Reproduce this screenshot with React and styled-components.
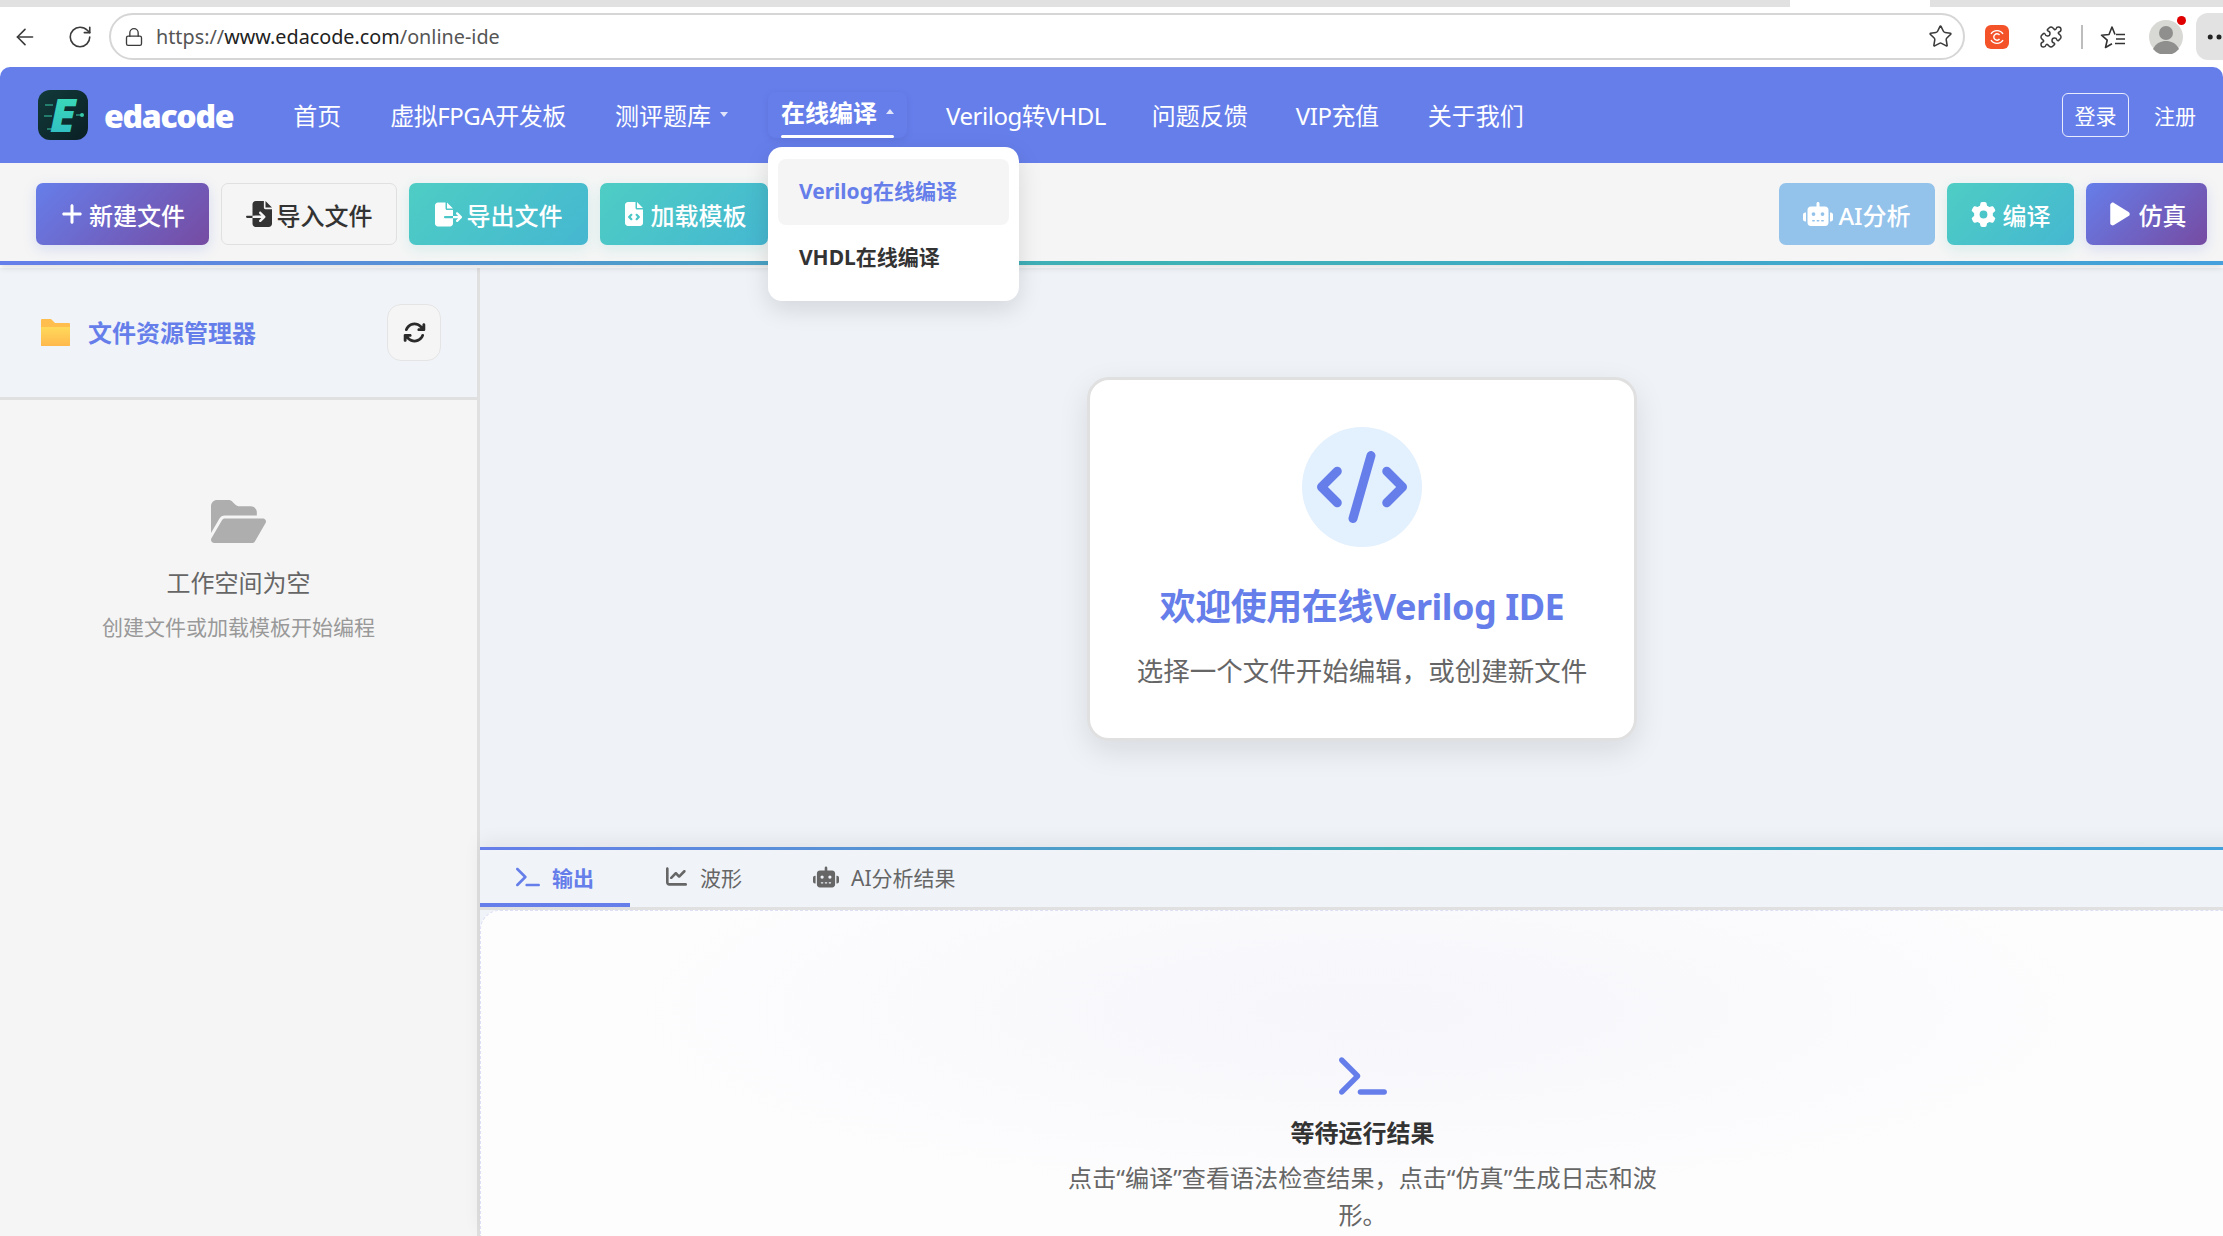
import React from 'react'
import styled, { createGlobalStyle } from 'styled-components'
import { ArrowLeft, RotateCw, Lock, Star, Puzzle, MoreHorizontal } from 'lucide-react'
import {
  FaPlus, FaFileImport, FaFileExport, FaFileCode, FaRobot, FaGear, FaPlay,
  FaArrowsRotate, FaFolderOpen, FaCode, FaTerminal, FaChartLine
} from 'react-icons/fa6'

const GlobalStyle = createGlobalStyle`
  html, body {
    margin: 0;
    padding: 0;
    overflow: hidden;
    background: #f0f4f9;
    font-family: "Noto Sans", "Noto Sans CJK SC", sans-serif;
  }
  * { box-sizing: border-box; }
`

const Page = styled.div`
  width: 2223px;
  height: 1236px;
  overflow: hidden;
  display: flex;
  flex-direction: column;
  background: #fff;
`

/* browser chrome */
const TabStrip = styled.div`
  height: 7px;
  flex: none;
  display: flex;
  background: #e1e1e1;
`

const ActiveTab = styled.div`
  width: 140px;
  margin-left: 1790px;
  background: #fff;
`

const BrowserBar = styled.div`
  height: 60px;
  flex: none;
  display: flex;
  align-items: center;
  padding: 0 0 1px 12px;
  background: #fff;
  color: #3b3b3b;
`

const ChromeButton = styled.div`
  width: ${p => p.$w || 40}px;
  margin-left: ${p => p.$ml || 0}px;
  margin-right: ${p => p.$mr || 0}px;
  flex: none;
  display: flex;
  justify-content: center;
  align-items: center;
`

const AddressBar = styled.div`
  width: 1856px;
  height: 47px;
  flex: none;
  display: flex;
  align-items: center;
  padding: 0 10px 0 13px;
  border: 2px solid #d6d6d6;
  border-radius: 24px;
  margin-right: 20px;
`

const UrlText = styled.span`
  margin-left: 12px;
  flex: 1;
  font-size: 19.800px;
  color: #555;
  span { color: #222; }
`

const ExtIcon = styled.div`
  width: 24px;
  height: 24px;
  flex: none;
  border-radius: 6px;
  background: #f4532a;
  display: flex;
  align-items: center;
  justify-content: center;
`

const Separator = styled.div`
  width: 2px;
  height: 24px;
  background: #bdbdbd;
  margin: 0 17px 0 15px;
  flex: none;
`

const FavoritesIcon = styled.svg`
  flex: none;
`

const Avatar = styled.div`
  position: relative;
  width: 34px;
  height: 34px;
  margin-left: 23px;
  flex: none;
  svg { display: block; }
`

const RedDot = styled.span`
  position: absolute;
  top: -4px;
  right: -3px;
  width: 9px;
  height: 9px;
  border-radius: 50%;
  background: #e00000;
`

const MenuButton = styled.div`
  width: 27px;
  height: 47px;
  margin-left: 13px;
  flex: none;
  overflow: hidden;
  border-radius: 12px 0 0 12px;
  background: #e2e2e2;
  display: flex;
  align-items: center;
  padding-left: 8px;
  color: #222;
  svg { flex: none; }
`

/* site nav */
const NavBar = styled.header`
  height: 96px;
  flex: none;
  position: relative;
  z-index: 5;
  display: flex;
  align-items: center;
  padding: 0 27px 0 38px;
  background: #667eea;
  border-radius: 10px 10px 0 0;
  color: #fff;
`

const Brand = styled.div`
  display: flex;
  align-items: center;
  gap: 16px;
  margin-right: 60px;
`

const BrandName = styled.span`
  font-size: 32px;
  font-weight: 900;
  letter-spacing: -1.300px;
`

const NavItem = styled.div`
  position: relative;
  display: flex;
  align-items: center;
  height: 46px;
  padding-bottom: 2px;
  margin-right: ${p => p.$mr ?? 49}px;
  font-size: 24px;
  white-space: nowrap;
  letter-spacing: ${p => p.$tight ? '-.45px' : '0'};
  ${p => p.$active && `
    padding: 0 13px 2px;
    margin-left: -13px;
    margin-right: 39px;
    font-weight: 700;
    border-radius: 8px;
    box-shadow: 0 2px 6px rgba(60, 70, 160, .18);
    span { transform: translateY(-3px); }
    &::after {
      content: "";
      position: absolute;
      left: 13px;
      right: 13px;
      bottom: 0;
      height: 3px;
      background: #fff;
      border-radius: 2px;
    }
  `}
`

const Caret = styled.i`
  display: inline-block;
  margin-left: 9px;
  border-left: 4px solid transparent;
  border-right: 4px solid transparent;
  ${p => p.$up
    ? 'border-bottom: 5px solid rgba(255,255,255,.8); transform: translateY(-3px);'
    : 'border-top: 5px solid rgba(255,255,255,.8);'}
`

const Dropdown = styled.div`
  position: absolute;
  top: 55px;
  left: 0;
  width: 251px;
  height: 154px;
  padding: 12px 10px 0;
  border-radius: 14px;
  background: #fff;
  box-shadow: 0 8px 24px rgba(0, 0, 0, .12);
`

const DropItem = styled.div`
  height: 66px;
  display: flex;
  align-items: center;
  padding: 0 0 4px 21px;
  border-radius: 8px;
  font-size: 21px;
  font-weight: 700;
  color: ${p => p.$active ? '#667eea' : '#333'};
  background: ${p => p.$active ? '#f5f5f5' : 'transparent'};
`

const NavRight = styled.div`
  margin-left: auto;
  display: flex;
  align-items: center;
  gap: 25px;
  font-size: 21px;
`

const LoginButton = styled.div`
  width: 67px;
  height: 44px;
  display: flex;
  align-items: center;
  justify-content: center;
  border: 1.5px solid rgba(255, 255, 255, .85);
  border-radius: 6px;
`

/* toolbar */
const Toolbar = styled.div`
  height: 102px;
  flex: none;
  position: relative;
  z-index: 3;
  display: flex;
  align-items: center;
  gap: 12px;
  padding: 4px 16px 0 36px;
  background: #f5f5f5;
  border-bottom: 4px solid transparent;
  border-image: linear-gradient(90deg, #667eea, #3db3b3 50%, #45a0dc) 1;
  box-shadow: 0 3px 6px rgba(0, 0, 0, .12);
`

const ToolButton = styled.div`
  width: ${p => p.$w}px;
  height: 62px;
  flex: none;
  display: flex;
  align-items: center;
  justify-content: center;
  gap: ${p => p.$gap ?? 5}px;
  border-radius: 7px;
  font-size: 24px;
  font-weight: 500;
  white-space: nowrap;
  color: ${p => p.$kind === 'plain' ? '#333' : '#fff'};
  border: ${p => p.$kind === 'plain' ? '1.5px solid #e0e0e0' : 'none'};
  background: ${p => ({
    primary: 'linear-gradient(135deg, #667eea, #764ba2)',
    teal: 'linear-gradient(135deg, #4ecdc4, #45b7d1)',
    ai: '#93c2eb',
    plain: '#f5f5f5'
  })[p.$kind]};
  box-shadow: ${p => p.$kind === 'primary'
    ? '0 4px 14px rgba(102, 126, 234, .2)'
    : p.$kind === 'teal' ? '0 4px 14px rgba(78, 205, 196, .18)' : 'none'};
  svg { flex: none; }
`

const ToolSpacer = styled.div`
  flex: 1;
`

/* workspace */
const Workspace = styled.div`
  flex: 1;
  min-height: 0;
  display: flex;
  margin-top: 3px;
  background: #f0f4f9;
`

const Sidebar = styled.aside`
  width: 480px;
  flex: none;
  border-right: 3px solid #e0e0e0;
  background: #f5f5f5;
`

const SidebarHead = styled.div`
  height: 132px;
  display: flex;
  align-items: center;
  padding: 0 36px 0 41px;
  background: #f0f4f9;
  border-bottom: 3px solid #e0e0e0;
`

const SidebarTitle = styled.h2`
  margin: 0 0 2px 18px;
  flex: 1;
  font-size: 24px;
  font-weight: 700;
  color: #667eea;
`

const RefreshButton = styled.div`
  width: 54px;
  height: 57px;
  display: flex;
  align-items: center;
  justify-content: center;
  border: 1.5px solid #e4e4e4;
  border-radius: 14px;
  background: #f5f5f5;
  color: #2b2b2b;
`

const EmptyFiles = styled.div`
  display: flex;
  flex-direction: column;
  align-items: center;
  padding-top: 94px;
  color: #aeaeae;
`

const EmptyTitle = styled.div`
  margin-top: 15px;
  font-size: 24px;
  color: #666;
`

const EmptyHint = styled.div`
  margin-top: 12px;
  font-size: 21px;
  color: #999;
`

const Main = styled.main`
  width: 1764px;
  flex: none;
  display: flex;
  flex-direction: column;
`

const EditorArea = styled.section`
  height: 579px;
  flex: none;
  display: flex;
  align-items: center;
  justify-content: center;
  padding-top: 3px;
  background: #eff3f8;
`

const WelcomeCard = styled.div`
  width: 550px;
  height: 364px;
  display: flex;
  flex-direction: column;
  align-items: center;
  padding-top: 47px;
  background: #fff;
  border: 3px solid #e0e0e0;
  border-radius: 22px;
  box-shadow: 0 10px 30px rgba(0, 0, 0, .1);
`

const CodeCircle = styled.div`
  width: 120px;
  height: 120px;
  border-radius: 50%;
  display: flex;
  align-items: center;
  justify-content: center;
  background: #e3f0fd;
  color: #667eea;
`

const WelcomeTitle = styled.h1`
  margin: 35px 0 0;
  font-size: 36px;
  line-height: 50px;
  font-weight: 700;
  letter-spacing: -.5px;
  color: #667eea;
`

const WelcomeText = styled.p`
  margin: 21px 0 0;
  font-size: 26.500px;
  line-height: 36px;
  color: #666;
`

const OutputPanel = styled.section`
  flex: 1;
  min-height: 0;
  display: flex;
  flex-direction: column;
  background: #f0f4f9;
  border-top: 3px solid transparent;
  border-image: linear-gradient(90deg, #667eea, #3db3b3 55%, #45a0dc) 1;
  box-shadow: 0 -6px 18px rgba(0, 0, 0, .06);
`

const Tabs = styled.div`
  height: 60px;
  flex: none;
  display: flex;
  border-bottom: 3px solid #e0e0e0;
`

const Tab = styled.div`
  width: ${p => p.$w}px;
  height: 57px;
  flex: none;
  display: flex;
  align-items: center;
  padding-left: ${p => p.$pl}px;
  gap: ${p => p.$gap}px;
  font-size: 21px;
  font-weight: ${p => p.$active ? 700 : 400};
  color: ${p => p.$active ? '#667eea' : '#666'};
  border-bottom: 4px solid ${p => p.$active ? '#667eea' : 'transparent'};
`

const OutputBody = styled.div`
  flex: 1;
  min-height: 0;
  display: flex;
  flex-direction: column;
  align-items: center;
  padding-top: 141px;
  border: 1px dashed #dcdff5;
  border-right: none;
  border-bottom: none;
  border-radius: 20px 0 0 0;
  background: radial-gradient(ellipse at 50% 30%, #f6f6fb, #fdfdfe 60%);
  color: #667eea;
`

const OutputTitle = styled.div`
  margin-top: 16px;
  font-size: 24px;
  line-height: 34px;
  font-weight: 700;
  color: #333;
`

const OutputText = styled.p`
  width: 600px;
  margin: 9px 0 0;
  font-size: 24.100px;
  line-height: 37px;
  text-align: center;
  color: #666;
`

function LogoMark() {
  return (
    <svg width="50" height="50" viewBox="0 0 50 50" overflow="visible">
      <defs>
        <linearGradient id="logoBg" x1="0" y1="0" x2="1" y2="1">
          <stop offset="0" stopColor="#123a3a" />
          <stop offset="1" stopColor="#0a1f24" />
        </linearGradient>
        <linearGradient id="logoE" x1="0" y1="0" x2="0" y2="1">
          <stop offset="0" stopColor="#3de3b4" />
          <stop offset="1" stopColor="#2fb8c6" />
        </linearGradient>
      </defs>
      <rect width="50" height="50" rx="12" fill="url(#logoBg)" />
      <path d="M7 15h8M6 26h8M9 39h8M38 25h7" stroke="#37c9a8" strokeWidth="1.200" />
      <circle cx="44" cy="25" r="2" fill="#37c9a8" />
      <text x="25" y="42" textAnchor="middle" fontSize="46" fontWeight="900" fontStyle="italic"
        fontFamily="Noto Sans, sans-serif" fill="url(#logoE)">E</text>
    </svg>
  )
}

function SidebarFolder() {
  return (
    <svg width="29" height="27" viewBox="0 0 29 27">
      <defs>
        <linearGradient id="folderFill" x1="0" y1="0" x2="0" y2="1">
          <stop offset="0" stopColor="#ffd95a" />
          <stop offset="1" stopColor="#ffb84d" />
        </linearGradient>
      </defs>
      <path d="M1 0h9l4 4h14a1 1 0 0 1 1 1v21a1 1 0 0 1-1 1H1a1 1 0 0 1-1-1V1a1 1 0 0 1 1-1z" fill="#ffbe4d" />
      <path d="M0 8h29v18a1 1 0 0 1-1 1H1a1 1 0 0 1-1-1z" fill="url(#folderFill)" />
    </svg>
  )
}

function ProfilePic() {
  return (
    <svg width="34" height="34" viewBox="0 0 34 34">
      <circle cx="17" cy="17" r="17" fill="#d8d8d4" />
      <circle cx="17" cy="13" r="7" fill="#8f8f8d" />
      <path d="M4 29c3-6 8-8 13-8s10 2 13 8a17 17 0 0 1-26 0z" fill="#8f8f8d" />
    </svg>
  )
}

function Favorites() {
  return (
    <FavoritesIcon width="26" height="24" viewBox="0 0 26 24" fill="none" stroke="#333" strokeWidth="1.600" strokeLinejoin="round">
      <path d="M15 9.500L12 2 9 9.500l-7.500.7 5.700 5-1.700 7.300 6.500-3.800" />
      <path d="M16 9.500h9M16 14h9M15 18.500h10" />
    </FavoritesIcon>
  )
}

export default function App() {
  return (
    <Page>
      <GlobalStyle />
      <TabStrip><ActiveTab /></TabStrip>
      <BrowserBar>
        <ChromeButton $w={26} $mr={29}><ArrowLeft size={30} strokeWidth={1.5} /></ChromeButton>
        <ChromeButton $w={26} $mr={16}><RotateCw size={26} strokeWidth={1.5} /></ChromeButton>
        <AddressBar>
          <Lock size={20} strokeWidth={1.6} />
          <UrlText>https://<span>www.edacode.com</span>/online-ide</UrlText>
          <Star size={25} strokeWidth={1.5} />
        </AddressBar>
        <ExtIcon>
          <svg width="18" height="18" viewBox="0 0 18 18" fill="none" stroke="#fff" strokeWidth="1.400">
            <path d="M3 6a7 7 0 0 1 12 0M15 12a7 7 0 0 1-12 0" />
            <path d="M11.500 7a3.200 3.200 0 1 0 0 4" />
          </svg>
        </ExtIcon>
        <ChromeButton $w={30} $ml={27}><Puzzle size={24} strokeWidth={1.5} /></ChromeButton>
        <Separator />
        <Favorites />
        <Avatar><ProfilePic /><RedDot /></Avatar>
        <MenuButton><MoreHorizontal size={30} /></MenuButton>
      </BrowserBar>

      <NavBar>
        <Brand>
          <LogoMark />
          <BrandName>edacode</BrandName>
        </Brand>
        <NavItem>首页</NavItem>
        <NavItem $tight>虚拟FPGA开发板</NavItem>
        <NavItem $mr={53}>测评题库<Caret /></NavItem>
        <NavItem $active>
          <span>在线编译</span><Caret $up />
          <Dropdown>
            <DropItem $active>Verilog在线编译</DropItem>
            <DropItem>VHDL在线编译</DropItem>
          </Dropdown>
        </NavItem>
        <NavItem $tight $mr={46}>Verilog转VHDL</NavItem>
        <NavItem $mr={48}>问题反馈</NavItem>
        <NavItem $tight>VIP充值</NavItem>
        <NavItem $mr={0}>关于我们</NavItem>
        <NavRight>
          <LoginButton>登录</LoginButton>
          <span>注册</span>
        </NavRight>
      </NavBar>

      <Toolbar>
        <ToolButton $w={173} $kind="primary"><FaPlus size={24} />新建文件</ToolButton>
        <ToolButton $w={176} $kind="plain"><FaFileImport size={26} />导入文件</ToolButton>
        <ToolButton $w={179} $kind="teal"><FaFileExport size={27} />导出文件</ToolButton>
        <ToolButton $w={168} $kind="teal"><FaFileCode size={24} />加载模板</ToolButton>
        <ToolSpacer />
        <ToolButton $w={156} $kind="ai"><FaRobot size={30} />AI分析</ToolButton>
        <ToolButton $w={127} $kind="teal" $gap={7}><FaGear size={25} />编译</ToolButton>
        <ToolButton $w={121} $kind="primary" $gap={6}><FaPlay size={26} />仿真</ToolButton>
      </Toolbar>

      <Workspace>
        <Sidebar>
          <SidebarHead>
            <SidebarFolder />
            <SidebarTitle>文件资源管理器</SidebarTitle>
            <RefreshButton><FaArrowsRotate size={23} /></RefreshButton>
          </SidebarHead>
          <EmptyFiles>
            <FaFolderOpen size={55} />
            <EmptyTitle>工作空间为空</EmptyTitle>
            <EmptyHint>创建文件或加载模板开始编程</EmptyHint>
          </EmptyFiles>
        </Sidebar>

        <Main>
          <EditorArea>
            <WelcomeCard>
              <CodeCircle><FaCode size={90} /></CodeCircle>
              <WelcomeTitle>欢迎使用在线Verilog IDE</WelcomeTitle>
              <WelcomeText>选择一个文件开始编辑，或创建新文件</WelcomeText>
            </WelcomeCard>
          </EditorArea>
          <OutputPanel>
            <Tabs>
              <Tab $w={150} $pl={36} $gap={12} $active><FaTerminal size={24} />输出</Tab>
              <Tab $w={149} $pl={36} $gap={13}><FaChartLine size={21} />波形</Tab>
              <Tab $w={300} $pl={34} $gap={12}><FaRobot size={26} />AI分析结果</Tab>
            </Tabs>
            <OutputBody>
              <FaTerminal size={48} />
              <OutputTitle>等待运行结果</OutputTitle>
              <OutputText>点击“编译”查看语法检查结果，点击“仿真”生成日志和波形。</OutputText>
            </OutputBody>
          </OutputPanel>
        </Main>
      </Workspace>
    </Page>
  )
}
